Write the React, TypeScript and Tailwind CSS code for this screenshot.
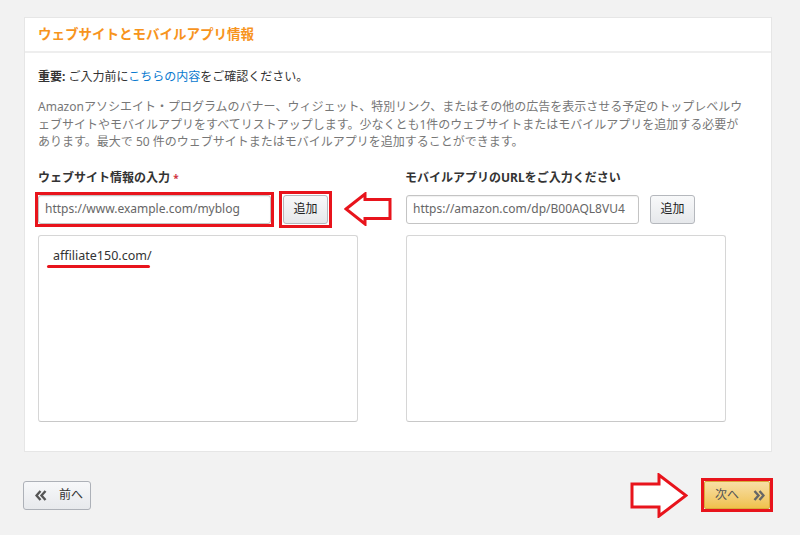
import React from "react";

const ChevL = () => (
  <svg width="12" height="11" viewBox="0 0 12 11" className="block">
    <path d="M5.5 1 L1.5 5.5 L5.5 10 M10.5 1 L6.5 5.5 L10.5 10" fill="none" stroke="#555" strokeWidth="2.4" strokeLinejoin="miter" />
  </svg>
);
const ChevR = () => (
  <svg width="12" height="11" viewBox="0 0 12 11" className="block">
    <path d="M1.5 1 L5.5 5.5 L1.5 10 M6.5 1 L10.5 5.5 L6.5 10" fill="none" stroke="#666" strokeWidth="2.4" strokeLinejoin="miter" />
  </svg>
);

const LeftArrow = () => (
  <svg width="48" height="34" viewBox="0 0 48 34" className="block">
    <polygon points="2,17 21,2 21,7.5 46,7.5 46,26.5 21,26.5 21,32" fill="#fff" stroke="#e8141c" strokeWidth="3" strokeLinejoin="miter" />
  </svg>
);
const RightArrow = () => (
  <svg width="58" height="45" viewBox="0 0 58 45" className="block">
    <polygon points="2,11 29,11 29,2 56,22.5 29,43 29,34 2,34" fill="#fff" stroke="#e8141c" strokeWidth="3" strokeLinejoin="miter" />
  </svg>
);

const inputCls =
  "w-[233px] h-[29px] border border-[#c4c4c4] rounded-[3px] bg-white flex items-center px-[6px] text-[12px] text-[#666] shadow-[inset_0_1px_1px_rgba(0,0,0,0.06)]";
const addBtnCls =
  "w-[45px] h-[29px] rounded-[3px] border border-[#b5b8bd] bg-gradient-to-b from-[#f8f9fa] to-[#e6e8eb] flex items-center justify-center text-[12px] text-[#222]";
const areaCls =
  "relative w-[320px] h-[187px] border border-[#d6d6d6] border-b-[#c8c8c8] rounded-[3px] bg-white";

export default function App() {
  return (
    <div className="w-[800px] h-[535px] bg-[#f2f2f2] pt-[17px] pl-[24px] pr-[28px] font-['Noto_Sans','Noto_Sans_CJK_JP',sans-serif] overflow-hidden">
      <div className="bg-white border border-[#e6e6e6] w-[748px]">
        <div className="h-[35px] flex items-center px-[13px] border-b-2 border-[#eeeeee]">
          <span className="text-[13.5px] font-bold text-[#f7941d] leading-none">
            ウェブサイトとモバイルアプリ情報
          </span>
        </div>
        <div className="px-[13px] pt-[15px] pb-[29px]">
          <p className="text-[12px] leading-[18px] text-[#333]">
            <span className="font-bold">重要:</span> ご入力前に
            <span className="text-[#0a7acf]">こちらの内容</span>をご確認ください。
          </p>
          <p className="mt-[12px] text-[12px] leading-[17.5px] text-[#777] whitespace-nowrap">
            Amazonアソシエイト・プログラムのバナー、ウィジェット、特別リンク、またはその他の広告を表示させる予定のトップレベルウ
            <br />
            ェブサイトやモバイルアプリをすべてリストアップします。少なくとも1件のウェブサイトまたはモバイルアプリを追加する必要が
            <br />
            あります。最大で 50 件のウェブサイトまたはモバイルアプリを追加することができます。
          </p>
          <div className="mt-[18px] flex">
            <div className="w-[367px]">
              <div className="text-[12px] leading-[18px] font-bold text-[#333]">
                ウェブサイト情報の入力 <span className="text-[#d0343f] text-[10px] align-top">*</span>
              </div>
              <div className="mt-[8px] h-[29px] flex items-center">
                <div className="-ml-[3px] border-[3px] border-[#e8141c]">
                  <div className={inputCls}>https://www.example.com/myblog</div>
                </div>
                <div className="ml-[5px] border-[3px] border-[#e8141c] p-px">
                  <div className={addBtnCls}>追加</div>
                </div>
                <div className="ml-[12px]">
                  <LeftArrow />
                </div>
              </div>
              <div className={areaCls + " mt-[11px]"}>
                <div className="pl-[14px] pt-[11px] text-[12.5px] leading-[18px] text-[#333]">affiliate150.com/</div>
                <div className="absolute left-[8px] top-[29px] w-[103px] h-[3px] bg-[#e8141c] rounded-full" />
              </div>
            </div>
            <div>
              <div className="text-[12px] leading-[18px] font-bold text-[#333]">
                モバイルアプリのURLをご入力ください
              </div>
              <div className="mt-[8px] h-[29px] flex items-center">
                <div className={inputCls + " ml-[1px]"}>https://amazon.com/dp/B00AQL8VU4</div>
                <div className={addBtnCls + " ml-[11px]"}>追加</div>
              </div>
              <div className={areaCls + " mt-[11px] ml-[1px]"} />
            </div>
          </div>
        </div>
      </div>
      <div className="mt-[21px] flex items-center justify-between w-[750px] -ml-[1px]">
        <div className="w-[68px] h-[29px] rounded-[3px] border border-[#adb1b8] bg-gradient-to-b from-[#f7f8fa] to-[#e7e9ec] flex items-center pl-[11px] gap-[12px] text-[12px] text-[#333]">
          <ChevL />
          <span>前へ</span>
        </div>
        <div className="flex items-center">
          <RightArrow />
          <div className="ml-[13px] border-[3px] border-[#e8141c]">
            <div className="w-[66px] h-[28px] rounded-[2px] border border-[#d9a93b] bg-gradient-to-b from-[#f7dfa5] to-[#f0c14b] flex items-center pl-[10px] gap-[14px] text-[12px] text-[#555]">
              <span>次へ</span>
              <ChevR />
            </div>
          </div>
        </div>
      </div>
    </div>
  );
}
